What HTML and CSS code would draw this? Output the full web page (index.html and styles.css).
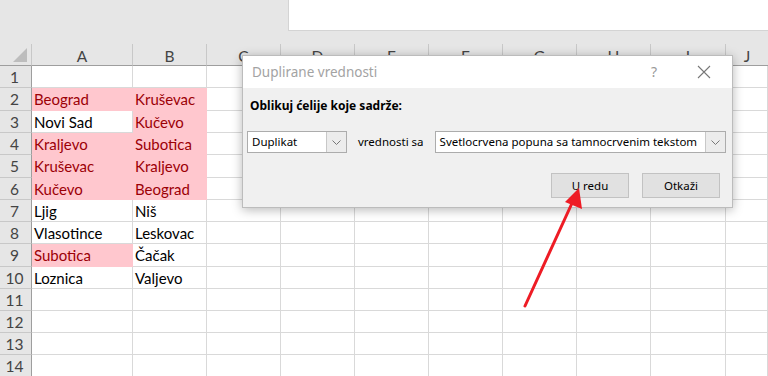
FILE: index.html
```html
<!DOCTYPE html>
<html>
<head>
<meta charset="utf-8">
<link rel="stylesheet" href="styles.css">
</head>
<body>
    <div class="topbar"><div class="formula"></div></div>

    <div class="sheet">
        <div class="hd corner"><span class="tri"></span></div>
        <div class="hd col">A</div><div class="hd col">B</div><div class="hd col">C</div><div class="hd col">D</div><div class="hd col">E</div>
        <div class="hd col">F</div><div class="hd col">G</div><div class="hd col">H</div><div class="hd col">I</div><div class="hd col last">J</div>

        <div class="hd row">1</div><div class="c"></div><div class="c"></div><div class="c"></div><div class="c"></div><div class="c"></div><div class="c"></div><div class="c"></div><div class="c"></div><div class="c"></div><div class="c"></div>
        <div class="hd row">2</div><div class="c dup">Beograd</div><div class="c dup">Kruševac</div><div class="c"></div><div class="c"></div><div class="c"></div><div class="c"></div><div class="c"></div><div class="c"></div><div class="c"></div><div class="c"></div>
        <div class="hd row">3</div><div class="c">Novi Sad</div><div class="c dup">Kučevo</div><div class="c"></div><div class="c"></div><div class="c"></div><div class="c"></div><div class="c"></div><div class="c"></div><div class="c"></div><div class="c"></div>
        <div class="hd row">4</div><div class="c dup">Kraljevo</div><div class="c dup">Subotica</div><div class="c"></div><div class="c"></div><div class="c"></div><div class="c"></div><div class="c"></div><div class="c"></div><div class="c"></div><div class="c"></div>
        <div class="hd row">5</div><div class="c dup">Kruševac</div><div class="c dup">Kraljevo</div><div class="c"></div><div class="c"></div><div class="c"></div><div class="c"></div><div class="c"></div><div class="c"></div><div class="c"></div><div class="c"></div>
        <div class="hd row">6</div><div class="c dup">Kučevo</div><div class="c dup">Beograd</div><div class="c"></div><div class="c"></div><div class="c"></div><div class="c"></div><div class="c"></div><div class="c"></div><div class="c"></div><div class="c"></div>
        <div class="hd row">7</div><div class="c">Ljig</div><div class="c">Niš</div><div class="c"></div><div class="c"></div><div class="c"></div><div class="c"></div><div class="c"></div><div class="c"></div><div class="c"></div><div class="c"></div>
        <div class="hd row">8</div><div class="c">Vlasotince</div><div class="c">Leskovac</div><div class="c"></div><div class="c"></div><div class="c"></div><div class="c"></div><div class="c"></div><div class="c"></div><div class="c"></div><div class="c"></div>
        <div class="hd row">9</div><div class="c dup">Subotica</div><div class="c">Čačak</div><div class="c"></div><div class="c"></div><div class="c"></div><div class="c"></div><div class="c"></div><div class="c"></div><div class="c"></div><div class="c"></div>
        <div class="hd row">10</div><div class="c">Loznica</div><div class="c">Valjevo</div><div class="c"></div><div class="c"></div><div class="c"></div><div class="c"></div><div class="c"></div><div class="c"></div><div class="c"></div><div class="c"></div>
        <div class="hd row">11</div><div class="c"></div><div class="c"></div><div class="c"></div><div class="c"></div><div class="c"></div><div class="c"></div><div class="c"></div><div class="c"></div><div class="c"></div><div class="c"></div>
        <div class="hd row">12</div><div class="c"></div><div class="c"></div><div class="c"></div><div class="c"></div><div class="c"></div><div class="c"></div><div class="c"></div><div class="c"></div><div class="c"></div><div class="c"></div>
        <div class="hd row">13</div><div class="c"></div><div class="c"></div><div class="c"></div><div class="c"></div><div class="c"></div><div class="c"></div><div class="c"></div><div class="c"></div><div class="c"></div><div class="c"></div>
        <div class="hd row">14</div><div class="c"></div><div class="c"></div><div class="c"></div><div class="c"></div><div class="c"></div><div class="c"></div><div class="c"></div><div class="c"></div><div class="c"></div><div class="c"></div>
    </div>

    <div class="dialog">
        <div class="titlebar">
            <span class="title">Duplirane vrednosti</span>
            <span class="help">?</span>
            <svg class="close" width="14" height="14" viewBox="0 0 14 14"><path d="M1 1L13 13M13 1L1 13" stroke="#777" stroke-width="1.1" fill="none"/></svg>
        </div>
        <div class="body">
            <div class="label">Oblikuj ćelije koje sadrže:</div>
            <div class="line">
                <div class="combo small"><span class="val">Duplikat</span><span class="drop"><svg width="9" height="5" viewBox="0 0 9 5"><path d="M0.5 0.5L4.5 4.5L8.5 0.5" stroke="#777" fill="none"/></svg></span></div>
                <span class="mid">vrednosti sa</span>
                <div class="combo wide"><span class="val">Svetlocrvena popuna sa tamnocrvenim tekstom</span><span class="drop"><svg width="9" height="5" viewBox="0 0 9 5"><path d="M0.5 0.5L4.5 4.5L8.5 0.5" stroke="#777" fill="none"/></svg></span></div>
            </div>
            <div class="buttons">
                <button class="btn">U redu</button>
                <button class="btn">Otkaži</button>
            </div>
        </div>
    </div>

    <svg class="arrow" width="768" height="376" viewBox="0 0 768 376">
        <line x1="525" y1="306" x2="573" y2="201" stroke="#ee1c25" stroke-width="3" stroke-linecap="round"/>
        <polygon points="579,188 582,209 565,202" fill="#ee1c25"/>
    </svg>
</body>
</html>
```

FILE: styles.css
```css
body {
    margin: 0;
    width: 768px;
    height: 376px;
    overflow: hidden;
    background: #e6e6e6;
    position: relative;
}
.topbar {
    height: 44px;
    padding-left: 288px;
}
.formula {
    height: 31px;
    background: #fff;
    border-left: 1px solid #d4d4d4;
    border-bottom: 1px solid #d4d4d4;
    box-sizing: border-box;
}
.sheet {
    display: grid;
    grid-template-columns: 32px 101px 74px 74px 74px 74px 74px 74px 74px 75px 1fr;
    grid-template-rows: 22px 22px 23px 22px 22px 23px 22px 22px 22px 23px 22px 22px 22px 22px 22px;
    background: #fff;
    font: 15px/22px Lato, "Liberation Sans", sans-serif;
}
.hd {
    background: #e6e6e6;
    color: #444;
    text-align: center;
    box-sizing: border-box;
    font-size: 15.5px;
}
.hd.col {
    border-right: 1px solid #c8c8c8;
    border-bottom: 1px solid #9e9e9e;
    line-height: 24px;
}
.hd.col.last { border-right: none; }
.hd.corner {
    position: relative;
    border-right: 1px solid #c8c8c8;
    border-bottom: 1px solid #9e9e9e;
}
.tri {
    position: absolute;
    right: 4px;
    bottom: 3px;
    width: 0;
    height: 0;
    border-left: 14px solid transparent;
    border-bottom: 14px solid #bdbdbd;
}
.hd.row {
    border-right: 1px solid #9e9e9e;
    border-bottom: 1px solid #c8c8c8;
    padding-right: 2px;
    line-height: 23px;
}
.c {
    box-sizing: border-box;
    border-right: 1px solid #d9d9d9;
    border-bottom: 1px solid #d9d9d9;
    padding-left: 2px;
    color: #000;
    white-space: nowrap;
    overflow: hidden;
    line-height: 23px;
}
.c.dup {
    background: #ffc7ce;
    color: #9c0006;
    border-color: #ffc7ce;
}

.dialog {
    position: absolute;
    left: 242px;
    top: 55px;
    width: 491px;
    height: 153px;
    box-sizing: border-box;
    border: 1px solid #bcbcbc;
    background: #f0f0f0;
    box-shadow: 0 2px 10px rgba(0, 0, 0, 0.28);
    font: 11.5px/16px "Noto Sans", "Open Sans", sans-serif;
    color: #000;
}
.titlebar {
    height: 32px;
    background: #fff;
    display: flex;
    align-items: center;
    padding-left: 9px;
}
.title {
    flex: 1;
    color: #a3a3a3;
    font-size: 13.5px;
}
.help {
    color: #999;
    font-size: 14px;
    margin-right: 40px;
}
.close { margin-right: 21px; }
.body { padding: 10px 6px 0 4px; }
.label {
    font-weight: bold;
    font-size: 12px;
    margin-left: 3px;
}
.line {
    display: flex;
    align-items: center;
    margin-top: 17px;
}
.combo {
    display: flex;
    height: 22px;
    box-sizing: border-box;
    border: 1px solid #acacac;
    background: #fff;
}
.combo.small { width: 100px; flex-shrink: 0; }
.combo.wide { flex: 1; min-width: 0; }
.val {
    flex: 1;
    padding-left: 4px;
    line-height: 20px;
    white-space: nowrap;
    overflow: hidden;
}
.drop {
    width: 19px;
    background: #ececec;
    border-left: 1px solid #c8c8c8;
    display: flex;
    align-items: center;
    justify-content: center;
}
.mid {
    margin: 0 11px 0 11px;
    white-space: nowrap;
    flex-shrink: 0;
}
.buttons {
    display: flex;
    justify-content: flex-end;
    gap: 13px;
    margin-top: 20px;
    margin-right: 6px;
}
.btn {
    width: 78px;
    height: 25px;
    background: #e1e1e1;
    border: 1px solid #c2c2c2;
    font: 11.5px "Noto Sans", "Open Sans", sans-serif;
    color: #000;
    padding: 0;
}
.arrow {
    position: absolute;
    left: 0;
    top: 0;
    pointer-events: none;
}
```
